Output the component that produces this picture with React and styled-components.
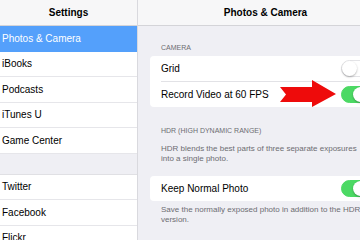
import React from 'react'
import styled, { createGlobalStyle } from 'styled-components'

const Global = createGlobalStyle`
  html, body { margin: 0; padding: 0; }
  body {
    width: 360px;
    height: 240px;
    overflow: hidden;
    font-family: "Liberation Sans", Arial, sans-serif;
    color: #000;
    background: #efeff4;
  }
`

const Screen = styled.div`
  display: flex;
  width: 360px;
  height: 240px;
  overflow: hidden;
  position: relative;
`

const Sidebar = styled.div`
  width: 137px;
  flex-shrink: 0;
  background: #fff;
  border-right: 1px solid #d9d9de;
  display: flex;
  flex-direction: column;
`

const Header = styled.div`
  height: 25px;
  flex-shrink: 0;
  background: #f7f7f8;
  border-bottom: 1px solid #d4d4d8;
  display: flex;
  align-items: center;
  justify-content: center;
  font-size: 10px;
  font-weight: bold;
`

const NavRow = styled.div`
  height: 24.5px;
  flex-shrink: 0;
  display: flex;
  align-items: center;
  padding-left: 2px;
  font-size: 10px;
  background: ${p => (p.$active ? '#54a0fb' : '#fff')};
  color: ${p => (p.$active ? '#fff' : '#000')};
  border-bottom: 1px solid ${p => (p.$active ? '#54a0fb' : '#e6e6ea')};
`

const NavGap = styled.div`
  height: 20px;
  flex-shrink: 0;
  background: #efeff4;
  border-bottom: 1px solid #e0e0e4;
`

const Detail = styled.div`
  width: 255px;
  flex-shrink: 0;
  display: flex;
  flex-direction: column;
`

const Content = styled.div`
  padding: 0 12px;
  display: flex;
  flex-direction: column;
`

const SectionLabel = styled.div`
  font-size: 7px;
  color: #6d6d72;
  text-transform: uppercase;
  padding: ${p => p.$top}px 11px 5px;
`

const Card = styled.div`
  background: #fff;
  border-radius: 4px;
  display: flex;
  flex-direction: column;
`

const Row = styled.div`
  height: 25px;
  margin-left: 11px;
  padding-right: 12px;
  display: flex;
  align-items: center;
  justify-content: space-between;
  font-size: 10px;
  border-top: ${p => (p.$first ? 'none' : '1px solid #e2e2e6')};
`

const Toggle = styled.div`
  width: 28px;
  height: 17px;
  border-radius: 9px;
  box-sizing: border-box;
  position: relative;
  background: ${p => (p.$on ? '#4cd964' : '#fff')};
  border: 1px solid ${p => (p.$on ? '#4cd964' : '#e3e3e6')};
  &::after {
    content: '';
    position: absolute;
    top: 0;
    left: ${p => (p.$on ? '11px' : '0')};
    width: 15px;
    height: 15px;
    border-radius: 50%;
    background: #fff;
    box-shadow: 0 1px 2px rgba(0, 0, 0, 0.3);
  }
`

const Note = styled.div`
  font-size: 8px;
  line-height: 10px;
  color: #6d6d72;
  padding: ${p => p.$top}px 11px ${p => p.$bottom}px;
`

const Arrow = styled.svg`
  position: absolute;
  left: 279px;
  top: 80px;
`

const navItems = ['iBooks', 'Podcasts', 'iTunes U', 'Game Center']
const socialItems = ['Twitter', 'Facebook', 'Flickr']

const App = () => {
  return (
    <Screen>
      <Global />
      <Sidebar>
        <Header>Settings</Header>
        <NavRow $active>Photos &amp; Camera</NavRow>
        {navItems.map(name => (
          <NavRow key={name}>{name}</NavRow>
        ))}
        <NavGap />
        {socialItems.map(name => (
          <NavRow key={name}>{name}</NavRow>
        ))}
      </Sidebar>
      <Detail>
        <Header>Photos &amp; Camera</Header>
        <Content>
          <SectionLabel $top={18}>Camera</SectionLabel>
          <Card>
            <Row $first>
              Grid
              <Toggle />
            </Row>
            <Row>
              Record Video at 60 FPS
              <Toggle $on />
            </Row>
          </Card>
          <SectionLabel $top={20}>HDR (High Dynamic Range)</SectionLabel>
          <Note $top={5} $bottom={12}>
            HDR blends the best parts of three separate exposures into a single photo.
          </Note>
          <Card>
            <Row $first>
              Keep Normal Photo
              <Toggle $on />
            </Row>
          </Card>
          <Note $top={4} $bottom={0}>
            Save the normally exposed photo in addition to the HDR version.
          </Note>
        </Content>
      </Detail>
      <Arrow width="60" height="28" viewBox="0 0 60 28">
        <path d="M1 7 L33 7 L33 0 L57 14 L33 27 L33 22 L1 22 L7 14.5 Z" fill="#ee0b0b" />
      </Arrow>
    </Screen>
  )
}

export default App
